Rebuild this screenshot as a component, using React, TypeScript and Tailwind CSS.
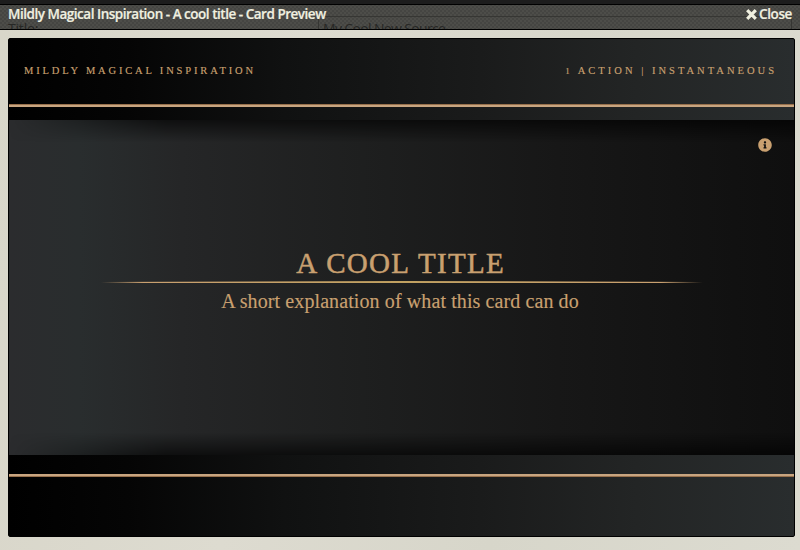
import { FaInfoCircle } from "react-icons/fa";

function CrossIcon() {
  return (
    <svg viewBox="0 0 11 11" className="size-[11px]" fill="none" stroke="currentColor" strokeWidth="3.2">
      <path d="M1.2 1.2 9.8 9.8M9.8 1.2 1.2 9.8" />
    </svg>
  );
}

function TitleBar() {
  return (
    <header className="relative flex h-[30px] shrink-0 items-start justify-between overflow-hidden border-b border-black bg-[#484843] px-2 font-['Open_Sans',sans-serif]">
      <div className="absolute inset-0 bg-[repeating-conic-gradient(#454542_0%_25%,#4d4d49_0%_50%)] bg-[length:4px_4px]" />
      <div className="absolute inset-x-0 top-0 h-[5px] border-b border-black bg-[#1d1d1d]" />
      <div className="absolute left-[318px] top-4 h-6 w-[474px] border border-[#363633]" />
      <span className="absolute left-2 top-[19px] text-sm leading-5 tracking-[-0.2px] text-[#272725]">Title:</span>
      <span className="absolute left-[323px] top-[19px] whitespace-nowrap text-sm leading-5 tracking-[-0.65px] text-[#272725]">My Cool New Source</span>
      <h1 className="relative mt-1 whitespace-nowrap text-[13.5px] font-semibold leading-5 tracking-[-0.48px] text-[#f0f0e0] [-webkit-text-stroke:0.2px_#f0f0e0]">
        Mildly Magical Inspiration - A cool title - Card Preview
      </h1>
      <button className="relative mt-1 flex items-center gap-[2px] text-[13.5px] font-semibold leading-5 tracking-[-0.4px] text-[#f0f0e0] [-webkit-text-stroke:0.2px_#f0f0e0]">
        <CrossIcon />
        Close
      </button>
    </header>
  );
}

export default function App() {
  return (
    <div className="flex h-[550px] w-[800px] flex-col overflow-hidden bg-[#dbd9cd]">
      <TitleBar />
      <main className="flex-1 bg-[linear-gradient(100deg,#d8d6c9,#dddbd0_35%,#d7d6ca_65%,#dcdbd0)] pb-[13px] pl-2 pr-[5px] pt-2">
        <article className="flex h-[499px] w-[787px] flex-col overflow-hidden rounded-[2px] border border-black bg-[linear-gradient(90deg,#000,#050505_15%,#101111_35%,#1a1b1b_60%,#232525_80%,#292d2e)] font-['Liberation_Serif',serif] text-[#c9a070]">
          <div className="flex h-[65px] shrink-0 items-center justify-between pb-0.5 pl-[15px] pr-[17px] text-[10.5px] uppercase [-webkit-text-stroke:0.15px_#c9a070]">
            <span className="tracking-[2.84px]">Mildly Magical Inspiration</span>
            <span className="tracking-[3.02px]">
              <span className="text-[9px]">1</span> Action | Instantaneous
            </span>
          </div>
          <div className="h-[3px] shrink-0 border-t border-[#97704c] bg-[#c8a580]" />
          <div className="h-[13px] shrink-0" />
          <section className="relative flex h-[335px] shrink-0 flex-col items-center bg-[linear-gradient(90deg,#2b2c2e,#292d2e_9%,#252627_22%,#1e1f1f_45%,#171717_70%,#0f0f0f)] pt-[125px]">
            <div className="absolute inset-x-0 top-0 h-[22px] bg-[linear-gradient(#0009,transparent)] [mask-image:linear-gradient(90deg,transparent,#000_20%)]" />
            <div className="absolute inset-x-0 bottom-0 h-[22px] bg-[linear-gradient(transparent,#0009)] [mask-image:linear-gradient(90deg,transparent,#000_20%)]" />
            <FaInfoCircle className="absolute right-[22px] top-[18px] size-[14px]" />
            <h2 className="whitespace-nowrap pr-0.5 text-[29px] leading-9 tracking-[1.25px] [-webkit-text-stroke:0.5px_#c9a070] [word-spacing:1px]">A COOL TITLE</h2>
            <div className="h-[2px] w-[602px] bg-[linear-gradient(90deg,transparent,#c9a070_7%,#c0a060_50%,#c9a070_93%,transparent)] [clip-path:polygon(0_50%,50%_0,100%_50%,100%_100%,0_100%)]" />
            <p className="mt-1.5 whitespace-nowrap pr-[3px] text-[20px] leading-6 tracking-[0.1px] [-webkit-text-stroke:0.15px_#c9a070]">A short explanation of what this card can do</p>
          </section>
          <div className="h-[19px] shrink-0" />
          <div className="h-[3px] shrink-0 border-b border-[#97704c] bg-[#c8a580]" />
        </article>
      </main>
    </div>
  );
}
